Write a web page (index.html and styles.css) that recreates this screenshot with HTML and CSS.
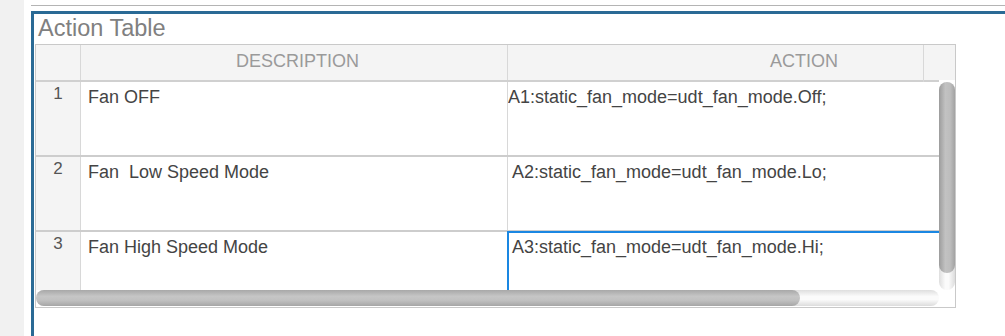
FILE: index.html
```html
<!DOCTYPE html>
<html lang="en">

<head>
    <meta charset="UTF-8">
    <meta name="viewport" content="width=device-width, initial-scale=1.0">
    <title>Action Table</title>
    <link rel="stylesheet" href="styles.css">
</head>

<body>

    <div class="page">
        <div class="sidebar"></div>
        <div class="main">
            <div class="rule"></div>
            <div class="frame">
                <div class="frame-title">Action Table</div>
                <div class="grid">
                    <div class="grid-head">
                        <div class="head-view">
                            <div class="row head-row">
                                <div class="cell num"></div>
                                <div class="cell desc">DESCRIPTION</div>
                                <div class="cell action">ACTION</div>
                            </div>
                        </div>
                        <div class="head-corner"></div>
                    </div>
                    <div class="grid-body">
                        <div class="body-view">
                            <div class="row">
                                <div class="cell num">1</div>
                                <div class="cell desc">Fan OFF</div>
                                <div class="cell action flush">A1:static_fan_mode=udt_fan_mode.Off;</div>
                            </div>
                            <div class="row">
                                <div class="cell num">2</div>
                                <div class="cell desc">Fan  Low Speed Mode</div>
                                <div class="cell action">A2:static_fan_mode=udt_fan_mode.Lo;</div>
                            </div>
                            <div class="row">
                                <div class="cell num">3</div>
                                <div class="cell desc">Fan High Speed Mode</div>
                                <div class="cell action focused">A3:static_fan_mode=udt_fan_mode.Hi;</div>
                            </div>
                        </div>
                        <div class="vscroll"><div class="vthumb"></div></div>
                        <div class="hscroll"><div class="hthumb"></div></div>
                        <div class="scroll-corner"></div>
                    </div>
                </div>
            </div>
        </div>
    </div>

</body>

</html>
```

FILE: styles.css
```css
html,
body {
    margin: 0;
    height: 100%;
    overflow: hidden;
    background-color: #fff;
    font-family: 'Liberation Sans', Arial, sans-serif;
}

.page {
    display: flex;
    height: 100%;
}

.sidebar {
    width: 24px;
    flex-shrink: 0;
    background-color: #f1f1f1;
}

.main {
    flex: 1;
    padding-left: 7px;
}

.rule {
    margin-top: 5px;
    height: 1px;
    background-color: #b4b4b4;
}

.frame {
    margin-top: 5px;
    width: 1100px;
    height: 400px;
    border-top: 3px solid #2a6a95;
    border-left: 3px solid #2a6a95;
}

.frame-title {
    padding-left: 4px;
    margin-bottom: 2px;
    font-size: 23.5px;
    line-height: 28px;
    color: #808080;
}

.grid {
    margin-left: 1px;
    width: 921px;
    border: 1px solid #c9c9c9;
    box-sizing: border-box;
}

.grid-head {
    display: flex;
    background-color: #f4f4f4;
}

.head-view {
    width: 887px;
    overflow: hidden;
    border-bottom: 2px solid #d0d0d0;
}

.head-corner {
    width: 31px;
    border-left: 1px solid #d8d8d8;
    background: linear-gradient(to right, #d0d0d0 15px, #fff 15px) bottom / 100% 2px no-repeat, #f4f4f4;
}

.row {
    display: flex;
    width: 1060px;
    height: 75px;
    border-bottom: 2px solid #cdcdcd;
    box-sizing: border-box;
}

.head-row {
    height: 35px;
    border-bottom: none;
}

.cell {
    box-sizing: border-box;
    border-right: 1px solid #d8d8d8;
    white-space: pre;
    overflow: hidden;
    font-size: 18px;
    line-height: 20px;
    color: #444;
    padding-top: 5px;
}

.head-row .cell {
    padding-top: 0;
    line-height: 32px;
    text-align: center;
    color: #9a9a9a;
}

.num {
    width: 45px;
    flex-shrink: 0;
    background-color: #f4f4f4;
    text-align: center;
    font-size: 17px;
    padding-top: 2px;
    color: #555;
}

.desc {
    width: 427px;
    flex-shrink: 0;
    padding-left: 7px;
}

.action {
    width: 588px;
    flex-shrink: 0;
    padding-left: 4px;
    border-right: none;
}

.action.flush {
    padding-left: 0;
}

.action.focused {
    outline: 2px solid #1a87e2;
    outline-offset: -1px;
}

.grid-body {
    display: grid;
    grid-template-columns: 903px 16px;
    grid-template-rows: 208px 17px;
}

.body-view {
    overflow: hidden;
}

.vscroll {
    border-radius: 8px;
    background: linear-gradient(to right, #dedede, #fbfbfb 40%, #fbfbfb 60%, #dcdcdc);
}

.vthumb {
    height: 191px;
    border-radius: 8px;
    background: linear-gradient(to right, #9c9c9c, #c2c2c2 40%, #bdbdbd 70%, #a2a2a2);
}

.hscroll {
    height: 16px;
    border-radius: 8px;
    background: linear-gradient(#dedede, #fbfbfb 40%, #fbfbfb 60%, #dcdcdc);
}

.hthumb {
    width: 764px;
    height: 16px;
    border-radius: 8px;
    background: linear-gradient(#a8a8a8, #c6c6c6 40%, #c0c0c0 65%, #a6a6a6);
}

.scroll-corner {
    background-color: #fff;
}
```
